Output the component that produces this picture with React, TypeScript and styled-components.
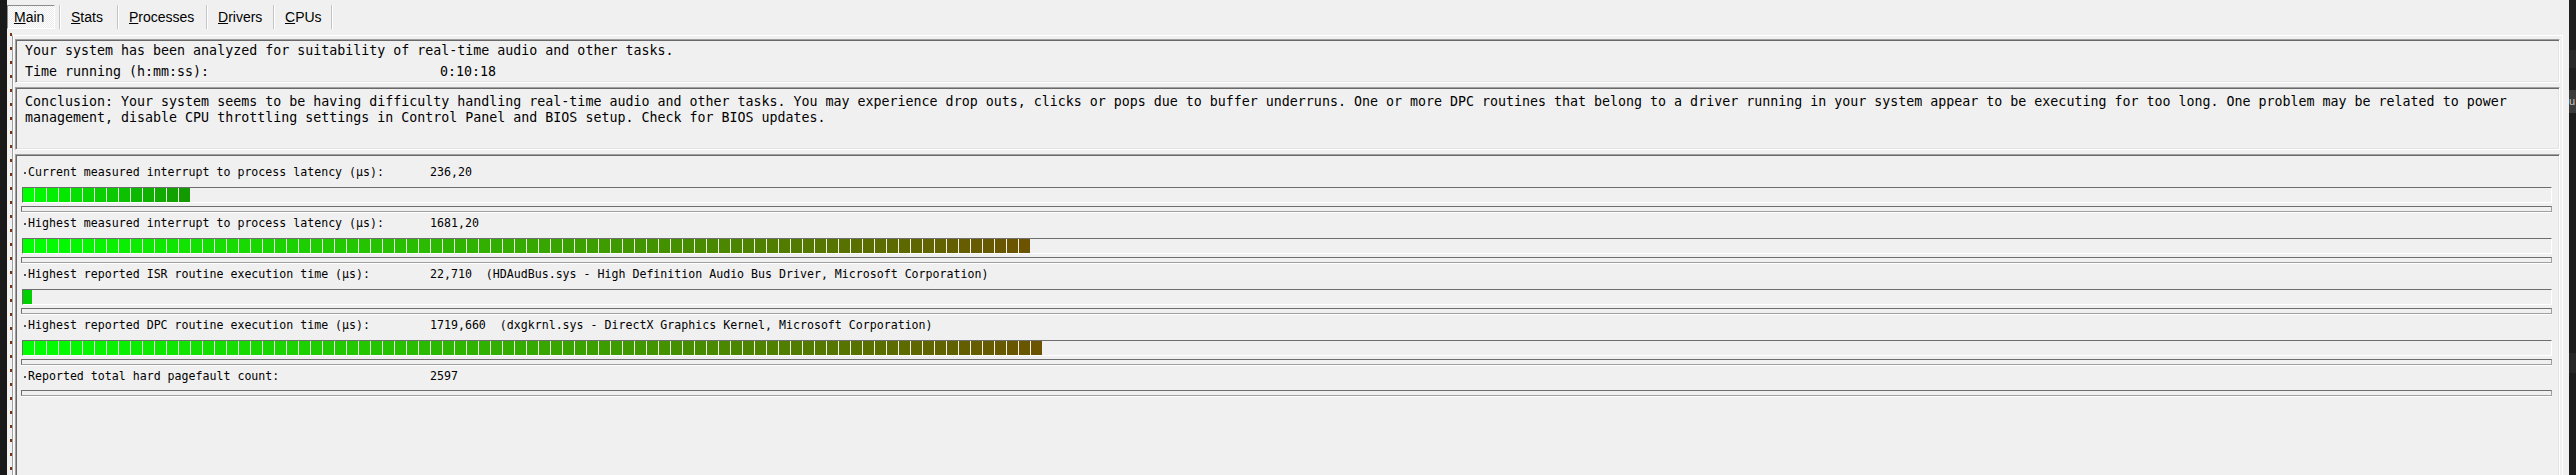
import styled, { createGlobalStyle, css } from 'styled-components';

const GlobalStyle = createGlobalStyle`
  html, body {
    margin: 0;
    padding: 0;
    background: #f0f0f0;
  }
  body {
    width: 2576px;
    height: 475px;
    overflow: hidden;
  }
`;

const Window = styled.div`
  display: flex;
  width: 2576px;
  height: 475px;
  overflow: hidden;
  background: #f0f0f0;
  color: #000;
`;

const LeftEdge = styled.div`
  width: 7px;
  flex: none;
  background: #191919;
`;

const RightEdge = styled.div`
  width: 7px;
  flex: none;
  display: flex;
  flex-direction: column;
  background: #1c1c1c;
  overflow: hidden;
`;

const EdgeBand = styled.div<{ $h: number; $bg: string }>`
  height: ${({ $h }) => $h}px;
  flex: none;
  background: ${({ $bg }) => $bg};
  color: #c8c8c8;
  font-family: 'Liberation Sans', Arial, sans-serif;
  font-size: 11px;
  line-height: ${({ $h }) => $h}px;
  white-space: nowrap;
`;

const Frame = styled.div`
  flex: 1;
  min-width: 0;
  display: flex;
  flex-direction: column;
`;

const TabStrip = styled.div`
  display: flex;
  align-items: flex-start;
  height: 35px;
  box-sizing: border-box;
  padding: 5px 0 0 0;
  font-family: 'Liberation Sans', Arial, sans-serif;
  font-size: 14px;
`;

const Tab = styled.div<{ $width: number; $active?: boolean }>`
  box-sizing: border-box;
  width: ${({ $width }) => $width}px;
  height: 24px;
  line-height: 22px;
  padding-left: 6px;
  border: 1px solid transparent;
  white-space: nowrap;

  ${({ $active }) =>
    $active &&
    css`
      border-color: #8c8c8c #ffffff #ffffff #8c8c8c;
      background: repeating-conic-gradient(#ffffff 0 25%, #ebebeb 0 50%) 0 0 / 2px 2px;
    `}
`;

const TabSeparator = styled.div`
  width: 1px;
  height: 24px;
  flex: none;
  margin: 0 4px;
  background: #c4c4c4;
  box-shadow: 1px 0 0 #ffffff;
`;

const PageRow = styled.div`
  flex: 1;
  min-height: 0;
  display: flex;
  padding-left: 3px;
`;

const Rail = styled.div`
  width: 2px;
  flex: none;
  margin-top: -2px;
  background: repeating-linear-gradient(to bottom, #7a3414 0 3px, transparent 3px 14px);
`;

const PageBody = styled.div`
  flex: 1;
  min-width: 0;
  display: flex;
  flex-direction: column;
  gap: 4px;
  overflow: hidden;
  margin-right: 6px;
  padding: 3px 2px 0 2px;
  border-top: 1px solid #ffffff;
  border-left: 1px solid #a0a0a0;
  border-right: 1px solid #ffffff;
  box-shadow: inset 1px 0 0 #ffffff;
`;

const Panel = styled.section<{ $height: number }>`
  flex: none;
  box-sizing: border-box;
  height: ${({ $height }) => $height}px;
  border: 1px solid;
  border-color: #a0a0a0 #ffffff #ffffff #a0a0a0;
  box-shadow: inset 1px 1px 0 #696969, inset -1px -1px 0 #e3e3e3;
  font-family: 'DejaVu Sans Mono', 'Liberation Mono', monospace;
`;

const SummaryPanel = styled(Panel)`
  display: flex;
  flex-direction: column;
  gap: 5px;
  padding: 3px 8px 0 9px;
  font-size: 13.3px;
  line-height: 16px;
`;

const SummaryLine = styled.div`
  display: grid;
  grid-template-columns: 415px auto;
  white-space: pre;
`;

const ConclusionPanel = styled(Panel)`
  padding: 6px 8px 0 9px;
  font-size: 13.3px;
  line-height: 16px;
  white-space: pre;
`;

const MetricsPanel = styled(Panel)`
  display: flex;
  flex-direction: column;
  gap: 4px;
  padding: 10px 7px 0 5px;
  font-size: 11.6px;
  line-height: 14px;
`;

const MetricRow = styled.div`
  display: flex;
  flex-direction: column;
`;

const MetricLabel = styled.div`
  display: flex;
  align-items: center;
  height: 14px;
  white-space: pre;
`;

const Bullet = styled.span`
  width: 2px;
  height: 2px;
  flex: none;
  margin: 1px 2px 0 3px;
  background: #505050;
`;

const LabelText = styled.span`
  width: 402px;
  flex: none;
`;

const Track = styled.div`
  display: flex;
  gap: 1px;
  height: 16px;
  box-sizing: border-box;
  margin: 8px 0 0 1px;
  border: 1px solid;
  border-color: #6e6e6e #ffffff #ffffff #6e6e6e;
`;

const Segment = styled.div<{ $w: number }>`
  width: ${({ $w }) => $w}px;
  flex: none;
  height: 100%;
`;

const Gauge = styled.div<{ $gap: number }>`
  height: 6px;
  box-sizing: border-box;
  margin-top: ${({ $gap }) => $gap}px;
  border: 1px solid;
  border-color: #6e6e6e #a0a0a0 #a0a0a0 #6e6e6e;
  box-shadow: 0 1px 0 #ffffff;
`;

type Bar = { segments: number; end: string; lastWidth?: number };

type Metric = { label: string; value: string; bar?: Bar };

const tabs = [
  { key: 'M', rest: 'ain', width: 48 },
  { key: 'S', rest: 'tats', width: 49 },
  { key: 'P', rest: 'rocesses', width: 80 },
  { key: 'D', rest: 'rivers', width: 58 },
  { key: 'C', rest: 'PUs', width: 49 },
];

const conclusion = [
  'Conclusion: Your system seems to be having difficulty handling real-time audio and other tasks. You may experience drop outs, clicks or pops due to buffer underruns. One or more DPC routines that belong to a driver running in your system appear to be executing for too long. One problem may be related to power',
  'management, disable CPU throttling settings in Control Panel and BIOS setup. Check for BIOS updates.',
];

const metrics: Metric[] = [
  {
    label: 'Current measured interrupt to process latency (µs):',
    value: '236,20',
    bar: { segments: 14, end: '#139a00' },
  },
  {
    label: 'Highest measured interrupt to process latency (µs):',
    value: '1681,20',
    bar: { segments: 84, end: '#6b5300' },
  },
  {
    label: 'Highest reported ISR routine execution time (µs):',
    value: '22,710  (HDAudBus.sys - High Definition Audio Bus Driver, Microsoft Corporation)',
    bar: { segments: 1, end: '#00d000', lastWidth: 9 },
  },
  {
    label: 'Highest reported DPC routine execution time (µs):',
    value: '1719,660  (dxgkrnl.sys - DirectX Graphics Kernel, Microsoft Corporation)',
    bar: { segments: 85, end: '#6b5300' },
  },
  {
    label: 'Reported total hard pagefault count:',
    value: '2597',
  },
];

const edgeBands = [
  { h: 50, bg: '#1f1f1f' },
  { h: 18, bg: '#292929' },
  { h: 22, bg: '#1f1f1f' },
  { h: 23, bg: '#3b3b3b', text: 'u' },
  { h: 240, bg: '#1c1c1c' },
  { h: 20, bg: '#262626' },
  { h: 102, bg: '#1c1c1c' },
];

function mix(from: string, to: string, t: number) {
  const a = parseInt(from.slice(1), 16);
  const b = parseInt(to.slice(1), 16);
  const ch = (shift: number) => {
    const x = (a >> shift) & 255;
    const y = (b >> shift) & 255;
    return Math.round(x + (y - x) * t);
  };
  return `rgb(${ch(16)}, ${ch(8)}, ${ch(0)})`;
}

function LevelBar({ bar }: { bar: Bar }) {
  const cells = Array.from({ length: bar.segments }, (_, i) => {
    const t = bar.segments > 1 ? i / (bar.segments - 1) : 1;
    const w = i === bar.segments - 1 && bar.lastWidth ? bar.lastWidth : 11;
    return <Segment key={i} $w={w} style={{ background: mix('#00ff00', bar.end, t) }} />;
  });
  return <Track>{cells}</Track>;
}

export default function App() {
  return (
    <Window>
      <GlobalStyle />
      <LeftEdge />
      <Frame>
        <TabStrip>
          {tabs.map((tab, i) => (
            <div key={tab.key} style={{ display: 'contents' }}>
              <Tab $width={tab.width} $active={i === 0}>
                <u>{tab.key}</u>
                {tab.rest}
              </Tab>
              <TabSeparator />
            </div>
          ))}
        </TabStrip>
        <PageRow>
          <Rail />
          <PageBody>
            <SummaryPanel $height={44}>
              <SummaryLine>
                <span>Your system has been analyzed for suitability of real-time audio and other tasks.</span>
              </SummaryLine>
              <SummaryLine>
                <span>Time running (h:mm:ss):</span>
                <span>0:10:18</span>
              </SummaryLine>
            </SummaryPanel>
            <ConclusionPanel $height={63}>
              {conclusion.map((line) => (
                <div key={line}>{line}</div>
              ))}
            </ConclusionPanel>
            <MetricsPanel $height={340}>
              {metrics.map((m) => (
                <MetricRow key={m.label}>
                  <MetricLabel>
                    <Bullet />
                    <LabelText>{m.label}</LabelText>
                    <span>{m.value}</span>
                  </MetricLabel>
                  {m.bar && <LevelBar bar={m.bar} />}
                  <Gauge $gap={m.bar ? 3 : 7} />
                </MetricRow>
              ))}
            </MetricsPanel>
          </PageBody>
        </PageRow>
      </Frame>
      <RightEdge>
        {edgeBands.map((b, i) => (
          <EdgeBand key={i} $h={b.h} $bg={b.bg}>
            {b.text}
          </EdgeBand>
        ))}
      </RightEdge>
    </Window>
  );
}
